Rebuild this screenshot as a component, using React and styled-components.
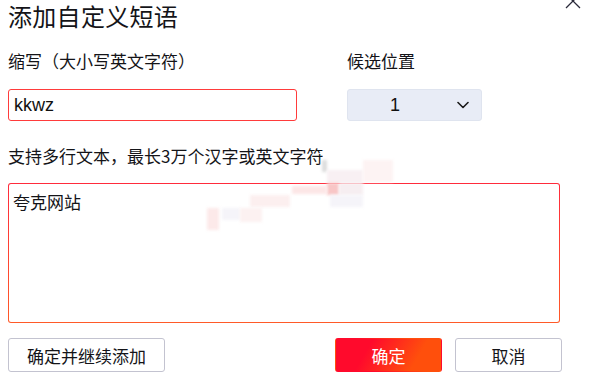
import React from 'react';
import styled, { createGlobalStyle } from 'styled-components';

const GlobalStyle = createGlobalStyle`
  html, body {
    margin: 0;
    padding: 0;
    background: #fff;
  }
  body {
    font-family: "Noto Sans CJK SC", "Noto Sans", sans-serif;
    color: #141418;
  }
`;

const Dialog = styled.div`
  position: relative;
  width: 598px;
  height: 382px;
  box-sizing: border-box;
  padding: 0 8px;
  overflow: hidden;
  background: #fff;
`;

const Title = styled.h1`
  margin: 0;
  font-size: 24px;
  font-weight: 400;
  line-height: 32px;
  letter-spacing: 0.3px;
`;

const CloseButton = styled.button`
  position: absolute;
  top: -7px;
  right: 17px;
  width: 16px;
  height: 16px;
  padding: 0;
  border: 0;
  background: none;
  cursor: pointer;
`;

const FieldRow = styled.div`
  display: grid;
  grid-template-columns: 289px 135px;
  column-gap: 50px;
  margin-top: 17px;
`;

const Field = styled.div`
  display: flex;
  flex-direction: column;
`;

const Label = styled.div`
  font-size: 17px;
  line-height: 24px;
  margin-top: ${(p) => p.$top || 0}px;
`;

const TextInput = styled.div`
  box-sizing: border-box;
  height: 32px;
  margin-top: 16px;
  border: 1px solid #ff3b3b;
  border-radius: 3px;
  padding: 0 5px;
  display: flex;
  align-items: center;
  font-family: "Liberation Sans", Arial, sans-serif;
  font-size: 18px;
  font-weight: 500;
  color: #111;
`;

const Select = styled.div`
  box-sizing: border-box;
  height: 32px;
  margin-top: 16px;
  border: 1px solid #dfe4ef;
  border-radius: 3px;
  background: #e8ecf6;
  display: flex;
  align-items: center;
  padding: 0 12px 0 42px;
  font-family: "Liberation Sans", Arial, sans-serif;
  font-size: 18px;
  font-weight: 500;
  color: #111;
`;

const SelectValue = styled.span`
  flex: 1;
`;

const TextArea = styled.div`
  box-sizing: border-box;
  height: 140px;
  margin-top: 15px;
  width: 552px;
  border: 1px solid transparent;
  border-radius: 3px;
  background: linear-gradient(#fff, #fff) padding-box,
    linear-gradient(180deg, #ff2b3c, #ff5a28) border-box;
  padding: 5px 4px;
  font-size: 17px;
  line-height: 26px;
`;

const Footer = styled.div`
  display: flex;
  align-items: center;
  gap: 13px;
  margin-top: 15px;
  width: 554px;
`;

const Spacer = styled.div`
  flex: 1;
`;

const Button = styled.button`
  box-sizing: border-box;
  height: 34px;
  width: ${(p) => p.$width}px;
  border-radius: 3px;
  font-family: "Noto Sans CJK SC", sans-serif;
  font-size: 17px;
  padding: 0;
  cursor: pointer;
  border: 1px solid ${(p) => (p.$primary ? 'transparent' : '#c3c3d0')};
  background: ${(p) => (p.$primary ? 'linear-gradient(120deg, #ff0a2c 30%, #ff4f0c 75%)' : '#fff')};
  color: ${(p) => (p.$primary ? '#fff' : '#141418')};
`;

const Smudge = styled.div`
  position: absolute;
  pointer-events: none;
  left: ${(p) => p.$x}px;
  top: ${(p) => p.$y}px;
  width: ${(p) => p.$w}px;
  height: ${(p) => p.$h}px;
  background: ${(p) => p.$c};
  filter: blur(1.5px);
`;

const smudges = [
  { x: 322, y: 160, w: 5, h: 12, c: '#dcdcdc' },
  { x: 327, y: 170, w: 36, h: 13, c: '#f8f0f3' },
  { x: 327, y: 183, w: 12, h: 12, c: '#f8c6c6' },
  { x: 339, y: 183, w: 24, h: 12, c: '#f6eef1' },
  { x: 330, y: 195, w: 33, h: 12, c: '#f5f4f9' },
  { x: 292, y: 186, w: 35, h: 8, c: '#fce6e6' },
  { x: 363, y: 160, w: 30, h: 22, c: '#fdf3f3' },
  { x: 250, y: 195, w: 40, h: 12, c: '#fcefef' },
  { x: 207, y: 208, w: 12, h: 22, c: '#fce9e9' },
  { x: 222, y: 208, w: 18, h: 12, c: '#f5f4f9' },
  { x: 240, y: 208, w: 22, h: 14, c: '#fcf1f1' },
];

const ChevronDown = () => (
  <svg width="12" height="8" viewBox="0 0 12 8" fill="none">
    <path d="M1 1.5l5 5 5-5" stroke="#1a1a1a" strokeWidth="1.6" strokeLinecap="round" strokeLinejoin="round" />
  </svg>
);

const CloseIcon = () => (
  <svg width="16" height="16" viewBox="0 0 16 16" fill="none">
    <path d="M1 1l14 14M15 1L1 15" stroke="#2a2a3a" strokeWidth="1.3" />
  </svg>
);

export default function App() {
  return (
    <>
      <GlobalStyle />
      <Dialog>
        <Title>添加自定义短语</Title>
        <CloseButton aria-label="关闭">
          <CloseIcon />
        </CloseButton>
        <FieldRow>
          <Field>
            <Label>缩写（大小写英文字符）</Label>
            <TextInput>kkwz</TextInput>
          </Field>
          <Field>
            <Label>候选位置</Label>
            <Select>
              <SelectValue>1</SelectValue>
              <ChevronDown />
            </Select>
          </Field>
        </FieldRow>
        <Label $top={23}>支持多行文本，最长3万个汉字或英文字符</Label>
        <TextArea>夸克网站</TextArea>
        <Footer>
          <Button $width={157}>确定并继续添加</Button>
          <Spacer />
          <Button $width={107} $primary>确定</Button>
          <Button $width={107}>取消</Button>
        </Footer>
        {smudges.map((s, i) => (
          <Smudge key={i} $x={s.x} $y={s.y} $w={s.w} $h={s.h} $c={s.c} />
        ))}
      </Dialog>
    </>
  );
}
